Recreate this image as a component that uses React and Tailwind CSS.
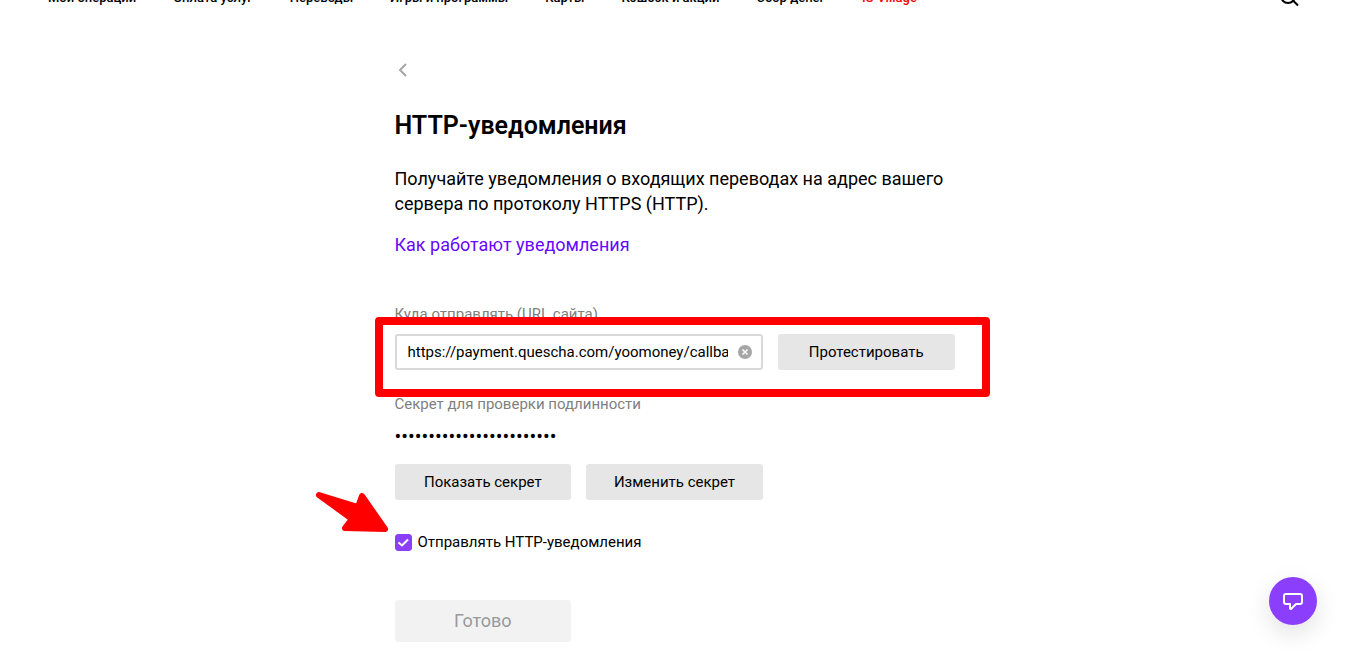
import React from "react";

const navItems = [
  { label: "Мои операции" },
  { label: "Оплата услуг" },
  { label: "Переводы" },
  { label: "Игры и программы" },
  { label: "Карты" },
  { label: "Кэшбэк и акции" },
  { label: "Сбор денег" },
  { label: "Ю Village", accent: true },
];

const SECRET_LENGTH = 24;

const Header = () => (
  <header className="h-2 flex items-end justify-between overflow-hidden pl-12 pr-[50px]">
    <nav>
      <ul className="flex gap-[37px]">
        {navItems.map(({ label, accent }) => (
          <li key={label}>
            <a
              href="#"
              className={`block whitespace-nowrap text-[13px] leading-5 font-medium ${
                accent ? "text-[#ff0000]" : "text-black"
              }`}
            >
              {label}
            </a>
          </li>
        ))}
      </ul>
    </nav>
    <button type="button" aria-label="Поиск" className="pb-px">
      <svg width="20" height="20" viewBox="0 0 20 20" fill="none" stroke="black" strokeWidth="2">
        <circle cx="9" cy="9" r="7" />
        <path d="M13.5 13L19 18.5" />
      </svg>
    </button>
  </header>
);

const GreyButton = ({ children }) => (
  <button type="button" className="h-9 rounded-[3px] bg-[#e6e6e6] text-[15px]">
    {children}
  </button>
);

const Arrow = () => (
  <svg
    className="pointer-events-none absolute -left-20 -top-[42px]"
    width="74"
    height="44"
    viewBox="0 0 74 44"
    fill="#ff0000"
    stroke="#ff0000"
    strokeWidth="6"
    strokeLinejoin="round"
  >
    <path d="M4 5L43 17L47 6L70 39L30 38L37 29Z" />
  </svg>
);

const App = () => {
  return (
    <div className="bg-white font-['Roboto',sans-serif] text-black">
      <Header />

      <main className="mx-auto max-w-[560px] pb-4 pt-[54px]">
        <a href="#" aria-label="Назад" className="flex h-4 items-center pl-[3px]">
          <svg width="9" height="14" viewBox="0 0 9 14" fill="none" stroke="#a6a6a6" strokeWidth="2">
            <path d="M8 1L2 7L8 13" />
          </svg>
        </a>

        <h1 className="mt-8 text-[25px] leading-8 font-semibold">HTTP-уведомления</h1>

        <p className="mt-6 text-lg leading-[25px]">
          Получайте уведомления о входящих переводах на адрес вашего сервера по протоколу HTTPS
          (HTTP).
        </p>
        <p className="mt-4 text-lg leading-[25px]">
          <a href="#" className="text-[#6608ff]">
            Как работают уведомления
          </a>
        </p>

        <form>
          <label htmlFor="url" className="mt-[47px] block text-[15px] leading-5 text-[#808080]">
            Куда отправлять (URL сайта)
          </label>
          <div className="relative mt-[10px] grid grid-cols-3 gap-[15px]">
            <div className="col-span-2 flex h-9 items-center rounded-[3px] border-2 border-[#d9d9d9] pl-[11px] pr-[9px]">
              <input
                id="url"
                type="text"
                defaultValue="https://payment.quescha.com/yoomoney/callback"
                className="min-w-0 flex-1 text-[15px] leading-6 outline-none"
              />
              <button type="button" aria-label="Очистить" className="ml-[10px]">
                <svg width="14" height="14" viewBox="0 0 14 14">
                  <circle cx="7" cy="7" r="7" fill="#a6a6a6" />
                  <path d="M4.5 4.5L9.5 9.5M9.5 4.5L4.5 9.5" stroke="white" strokeWidth="1.5" />
                </svg>
              </button>
            </div>
            <GreyButton>Протестировать</GreyButton>
            <div className="pointer-events-none absolute -bottom-[27px] -left-5 -right-[35px] -top-[17px] rounded-[4px] border-8 border-[#ff0000]" />
          </div>

          <p className="mt-6 text-[15px] leading-5 text-[#808080]">Секрет для проверки подлинности</p>
          <p className="mt-3 text-xl leading-5">{"•".repeat(SECRET_LENGTH)}</p>
          <div className="mt-[18px] grid grid-cols-3 gap-[15px]">
            <GreyButton>Показать секрет</GreyButton>
            <GreyButton>Изменить секрет</GreyButton>
          </div>

          <div className="relative mt-8 flex h-5 items-center">
            <Arrow />
            <label className="flex items-center gap-[6px] text-[15px] leading-5">
              <span className="grid">
                <input
                  type="checkbox"
                  defaultChecked
                  className="col-start-1 row-start-1 size-[17px] appearance-none rounded-[3px] border border-[#8b3ffd] checked:bg-[#8b3ffd]"
                />
                <svg
                  className="pointer-events-none col-start-1 row-start-1"
                  width="17"
                  height="17"
                  viewBox="0 0 17 17"
                  fill="none"
                  stroke="white"
                  strokeWidth="2"
                >
                  <path d="M3.5 8.5L7 11.5L13 5.5" />
                </svg>
              </span>
              Отправлять HTTP-уведомления
            </label>
          </div>

          <div className="mt-12 grid grid-cols-3 gap-[15px]">
            <button type="submit" disabled className="h-[42px] rounded-[3px] bg-[#f2f2f2] text-lg text-[#999999]">
              Готово
            </button>
          </div>
        </form>
      </main>

      <button
        type="button"
        aria-label="Чат"
        className="fixed bottom-8 right-8 flex size-12 items-center justify-center rounded-full bg-[#8b3ffd] shadow-[0_8px_24px_rgba(0,0,0,0.12)]"
      >
        <svg width="22" height="20" viewBox="0 0 22 20" fill="none" stroke="white" strokeWidth="2" strokeLinejoin="round">
          <path d="M4 3H18Q20 3 20 5V11Q20 13 18 13H14L9 18L8 17.5V13H4Q2 13 2 11V5Q2 3 4 3Z" />
        </svg>
      </button>
    </div>
  );
};

export default App;
